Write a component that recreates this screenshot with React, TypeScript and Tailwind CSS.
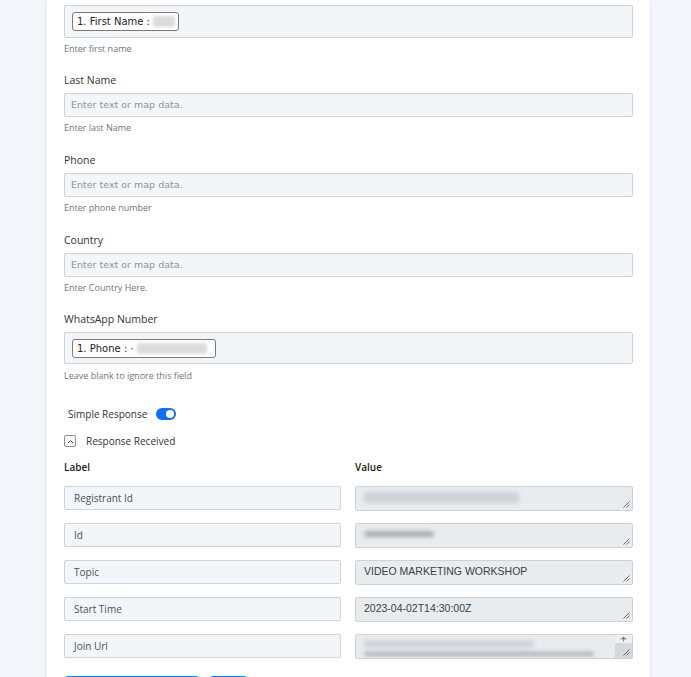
import React from "react";

const sans = { fontFamily: '"Open Sans", "Noto Sans", sans-serif' };

function Helper({ children, extra }: { children: React.ReactNode; extra?: boolean }) {
  return (
    <div className={`${extra ? "mt-[6px]" : "mt-[5px]"} text-[9px] leading-[12px] text-[#6c757d]`}>
      {children}
    </div>
  );
}

function FieldLabel({ children, tight }: { children: React.ReactNode; tight?: boolean }) {
  return (
    <div
      className={`${tight ? "mt-[18px]" : "mt-[19px]"} mb-[6px] text-[10.5px] leading-[14px] text-[#2f3337]`}
    >
      {children}
    </div>
  );
}

function TextInput() {
  return (
    <div className="h-[24px] rounded-[2px] border border-[#cfd4da] bg-[#f3f6f9] flex items-center px-[6px]">
      <span className="[font-family:'DejaVu_Sans',Verdana,sans-serif] text-[9.5px] text-[#8c949c]">
        Enter text or map data.
      </span>
    </div>
  );
}

function Pill({ text, w, blurW }: { text: string; w: number; blurW: number }) {
  return (
    <div
      className="h-[19px] rounded-[3px] border border-[#7a7a7a] bg-white flex items-center pl-[4px] overflow-hidden"
      style={{ width: w }}
    >
      <span className="[font-family:'DejaVu_Sans',Verdana,sans-serif] text-[10px] text-[#222] whitespace-pre">
        {text}
      </span>
      <span className="ml-[3px] h-[11px] rounded-[2px] bg-[#dcdcdc] blur-[1.5px]" style={{ width: blurW }} />
    </div>
  );
}

function Grip() {
  return (
    <svg className="absolute right-[2px] bottom-[2px]" width="8" height="8" viewBox="0 0 8 8">
      <path d="M7.5 1.5 L1.5 7.5 M7.5 4.5 L4.5 7.5" stroke="#5c5c5c" strokeWidth="0.9" />
    </svg>
  );
}

function ValueBox({ children, scroll }: { children?: React.ReactNode; scroll?: boolean }) {
  return (
    <div className="relative h-[25px] rounded-[2px] border border-[#cdd2d8] bg-[#e9ecef] overflow-hidden">
      <div className="px-[8px] pt-[4px] [font-family:'Liberation_Sans',Arial,sans-serif] text-[10.5px] leading-[13px] text-[#3a3f44]">
        {children}
      </div>
      {scroll && (
        <div className="absolute right-0 top-0 bottom-0 w-[17px] bg-[#d6d9dc] flex flex-col">
          <div className="h-[8px] bg-[#eef0f2] flex items-center justify-center">
            <svg width="9" height="6" viewBox="0 0 9 6">
              <path d="M1 3 H8" stroke="#888" strokeWidth="0.8" />
              <path d="M4.5 0.5 L6.5 2.8 H2.5 Z" fill="#666" />
              <path d="M4.5 3 V5.5" stroke="#666" strokeWidth="0.8" />
            </svg>
          </div>
        </div>
      )}
      <Grip />
    </div>
  );
}

function LabelBox({ children }: { children: React.ReactNode }) {
  return (
    <div className="h-[24px] rounded-[2px] border border-[#cfd4da] bg-[#f3f6f9] flex items-center px-[9px] text-[10px] text-[#4a4f55]">
      {children}
    </div>
  );
}

function Smudge({ w, h = 9, dark }: { w: number; h?: number; dark?: boolean }) {
  return (
    <div
      className={`${dark ? "bg-[#a9acb0]" : "bg-[#cfd2d6]"} rounded-[3px] blur-[2px]`}
      style={{ width: w, height: h }}
    />
  );
}

export default function App() {
  const rows: { label: string; value: React.ReactNode; scroll?: boolean }[] = [
    { label: "Registrant Id", value: <div className="pt-[1px]"><Smudge w={155} h={11} /></div> },
    { label: "Id", value: <div className="pt-[3px]"><Smudge w={70} h={6} dark /></div> },
    { label: "Topic", value: "VIDEO MARKETING WORKSHOP" },
    { label: "Start Time", value: "2023-04-02T14:30:00Z" },
    {
      label: "Join Url",
      scroll: true,
      value: (
        <div className="flex flex-col gap-[4px] pt-[1px]">
          <Smudge w={170} h={8} />
          <Smudge w={230} h={4} dark />
        </div>
      ),
    },
  ];

  return (
    <div className="h-[677px] w-[691px] overflow-hidden bg-[#f3f6fa]" style={sans}>
      <div className="ml-[46px] w-[605px] min-h-[700px] bg-white border-x border-[#e8ecf1] shadow-[0_0_4px_rgba(0,0,0,0.06)] pl-[17px] pr-[17px] pt-[5px]">
        {/* First Name */}
        <div className="h-[33px] rounded-[2px] border border-[#cfd4da] bg-[#f3f6f9] flex items-center px-[7px]">
          <Pill text="1. First Name :" w={107} blurW={22} />
        </div>
        <Helper>Enter first name</Helper>

        <FieldLabel tight>Last Name</FieldLabel>
        <TextInput />
        <Helper>Enter last Name</Helper>

        <FieldLabel>Phone</FieldLabel>
        <TextInput />
        <Helper>Enter phone number</Helper>

        <FieldLabel>Country</FieldLabel>
        <TextInput />
        <Helper>Enter Country Here.</Helper>

        <FieldLabel tight>WhatsApp Number</FieldLabel>
        <div className="h-[32px] rounded-[2px] border border-[#cfd4da] bg-[#f3f6f9] flex items-center px-[7px]">
          <Pill text="1. Phone : ·" w={144} blurW={70} />
        </div>
        <Helper extra>Leave blank to ignore this field</Helper>

        {/* Simple Response toggle */}
        <div className="mt-[25px] flex items-center h-[14px] pl-[4px]">
          <span className="text-[10px] text-[#2f3337]">Simple Response</span>
          <div className="ml-[9px] w-[20px] h-[12px] rounded-full bg-[#0d6efd] flex items-center justify-end pr-[2px]">
            <div className="w-[8px] h-[8px] rounded-full bg-white" />
          </div>
        </div>

        {/* Response Received */}
        <div className="mt-[13px] flex items-center h-[14px]">
          <div className="w-[12px] h-[12px] rounded-[2px] border border-[#8a8f94] flex items-center justify-center">
            <svg width="7" height="5" viewBox="0 0 7 5">
              <path d="M1 4 L3.5 1.5 L6 4" fill="none" stroke="#333" strokeWidth="1" />
            </svg>
          </div>
          <span className="ml-[10px] text-[10px] text-[#2f3337]">Response Received</span>
        </div>

        {/* Label / Value table */}
        <div className="mt-[12px] grid grid-cols-[277px_278px] gap-x-[14px] gap-y-[12px]">
          <div className="text-[10px] leading-[14px] font-semibold text-[#222]">Label</div>
          <div className="text-[10px] leading-[14px] font-semibold text-[#222]">Value</div>
          {rows.map((r) => (
            <React.Fragment key={r.label}>
              <LabelBox>{r.label}</LabelBox>
              <ValueBox scroll={r.scroll}>{r.value}</ValueBox>
            </React.Fragment>
          ))}
        </div>

        {/* Action buttons */}
        <div className="mt-[17px] flex gap-[11px] pl-[1px]">
          <div className="w-[134px] h-[28px] rounded-[3px] bg-[#0b84ff]" />
          <div className="w-[37px] h-[28px] rounded-[3px] bg-[#0b84ff]" />
        </div>
      </div>
    </div>
  );
}
